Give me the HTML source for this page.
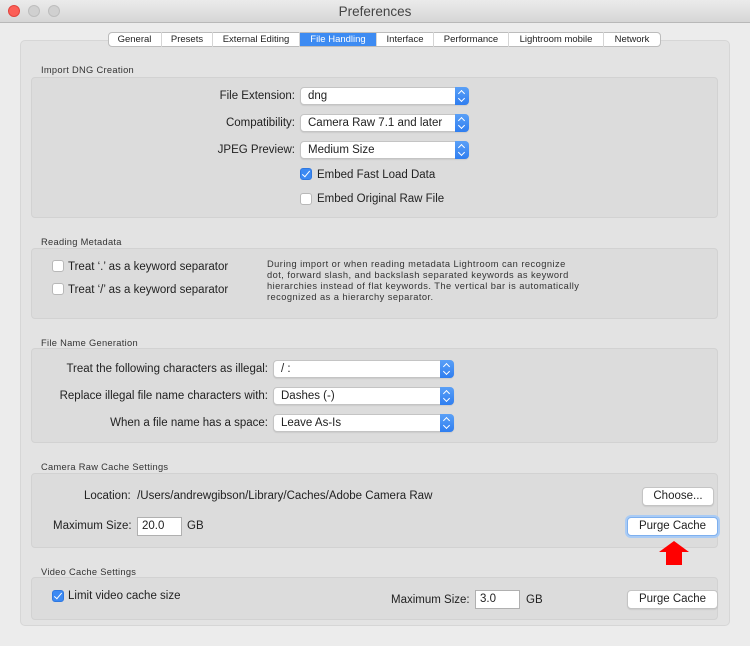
<!DOCTYPE html>
<html><head><meta charset="utf-8"><style>
*{margin:0;padding:0;box-sizing:border-box}
body{width:750px;height:646px;background:#ececec;font-family:"Liberation Sans",sans-serif;color:#222;position:relative;overflow:hidden}
.a{position:absolute;white-space:nowrap}
.t{font-size:11.5px;line-height:14px}
.g{font-size:9.3px;color:#333;line-height:11px;letter-spacing:.3px}
.box{position:absolute;left:31px;width:687px;background:#dcdcdc;border:1px solid #d2d2d2;border-radius:4px}
.pop{position:absolute;height:18px;background:#fff;border:1px solid #c4c4c4;border-radius:4px;font-size:11.5px;line-height:16px;padding-left:7px;box-shadow:0 1px 1px rgba(0,0,0,.08)}
.pop .s{position:absolute;right:-1px;top:-1px;width:14px;height:18px;background:linear-gradient(#5aa0f7,#2f7ef0);border-radius:0 4px 4px 0}
.pop .s:before{content:"";position:absolute;left:4px;top:4px;width:4px;height:4px;border-left:1.3px solid #fff;border-top:1.3px solid #fff;transform:rotate(45deg)}
.pop .s:after{content:"";position:absolute;left:4px;top:9px;width:4px;height:4px;border-right:1.3px solid #fff;border-bottom:1.3px solid #fff;transform:rotate(45deg)}
.cb{position:absolute;width:12px;height:12px;background:#fff;border:1px solid #b8b8b8;border-radius:3px}
.cb.on{background:#3b89f3;border-color:#2f78e0}
.cb.on:after{content:"";position:absolute;left:3px;top:0px;width:3px;height:7px;border-right:1.6px solid #fff;border-bottom:1.6px solid #fff;transform:rotate(40deg)}
.btn{position:absolute;height:19px;background:#fff;border:1px solid #c4c4c4;border-radius:4px;font-size:11.5px;line-height:17px;text-align:center;box-shadow:0 1px 1px rgba(0,0,0,.08)}
.inp{position:absolute;height:19px;background:#fff;border:1px solid #b0b0b0;font-size:11.5px;line-height:17px;padding-left:4px}
.tab{position:absolute;top:32px;height:15px;font-size:9.5px;line-height:16px;text-align:center;border-right:1px solid #d5d5d5}
</style></head><body>
<div class="a" style="left:0;top:0;width:750px;height:23px;background:linear-gradient(#ebebeb,#d6d6d6);border-bottom:1px solid #b8b8b8"></div>
<div class="a" style="left:8px;top:5px;width:12px;height:12px;border-radius:6px;background:#fc5f57;border:1px solid #e1443e"></div>
<div class="a" style="left:28px;top:5px;width:12px;height:12px;border-radius:6px;background:#d0d0d0;border:1px solid #bdbdbd"></div>
<div class="a" style="left:48px;top:5px;width:12px;height:12px;border-radius:6px;background:#d0d0d0;border:1px solid #bdbdbd"></div>
<div class="a" style="left:0;width:750px;top:4px;text-align:center;font-size:13.5px;color:#444">Preferences</div>

<div class="a" style="left:20px;top:40px;width:710px;height:586px;background:#e3e3e3;border:1px solid #d6d6d6;border-radius:5px"></div>
<div class="a" style="left:108px;top:32px;width:553px;height:15px;background:#fff;border:1px solid #bcbcbc;border-radius:4px"></div>
<div class="tab" style="left:108px;width:54px">General</div>
<div class="tab" style="left:162px;width:51px">Presets</div>
<div class="tab" style="left:213px;width:87px">External Editing</div>
<div class="tab" style="left:300px;width:77px;background:#3d8bf2;color:#fff;top:33px;height:13px;line-height:14px">File Handling</div>
<div class="tab" style="left:377px;width:57px">Interface</div>
<div class="tab" style="left:434px;width:75px">Performance</div>
<div class="tab" style="left:509px;width:95px">Lightroom mobile</div>
<div class="tab" style="left:604px;width:56px;border-right:none">Network</div>

<div class="a g" style="left:41px;top:65px">Import DNG Creation</div>
<div class="box" style="top:77px;height:141px"></div>
<div class="a t" style="left:150px;width:145px;text-align:right;top:89px">File Extension:</div>
<div class="pop" style="left:300px;top:87px;width:169px">dng<div class="s"></div></div>
<div class="a t" style="left:150px;width:145px;text-align:right;top:116px">Compatibility:</div>
<div class="pop" style="left:300px;top:114px;width:169px">Camera Raw 7.1 and later<div class="s"></div></div>
<div class="a t" style="left:150px;width:145px;text-align:right;top:143px">JPEG Preview:</div>
<div class="pop" style="left:300px;top:141px;width:169px">Medium Size<div class="s"></div></div>
<div class="cb on" style="left:300px;top:168px"></div>
<div class="a t" style="left:317px;top:168px">Embed Fast Load Data</div>
<div class="cb" style="left:300px;top:193px"></div>
<div class="a t" style="left:317px;top:192px">Embed Original Raw File</div>

<div class="a g" style="left:41px;top:237px">Reading Metadata</div>
<div class="box" style="top:248px;height:71px"></div>
<div class="cb" style="left:52px;top:260px"></div>
<div class="a t" style="left:68px;top:260px">Treat ‘.’ as a keyword separator</div>
<div class="cb" style="left:52px;top:283px"></div>
<div class="a t" style="left:68px;top:283px">Treat ‘/’ as a keyword separator</div>
<div class="a g" style="left:267px;top:259px;line-height:11px;font-size:9.3px;letter-spacing:.45px">During import or when reading metadata Lightroom can recognize<br>dot, forward slash, and backslash separated keywords as keyword<br>hierarchies instead of flat keywords. The vertical bar is automatically<br>recognized as a hierarchy separator.</div>

<div class="a g" style="left:41px;top:338px">File Name Generation</div>
<div class="box" style="top:348px;height:95px"></div>
<div class="a t" style="left:40px;width:228px;text-align:right;top:362px">Treat the following characters as illegal:</div>
<div class="pop" style="left:273px;top:360px;width:181px">/ :<div class="s"></div></div>
<div class="a t" style="left:40px;width:228px;text-align:right;top:389px">Replace illegal file name characters with:</div>
<div class="pop" style="left:273px;top:387px;width:181px">Dashes (-)<div class="s"></div></div>
<div class="a t" style="left:40px;width:228px;text-align:right;top:416px">When a file name has a space:</div>
<div class="pop" style="left:273px;top:414px;width:181px">Leave As-Is<div class="s"></div></div>

<div class="a g" style="left:41px;top:462px">Camera Raw Cache Settings</div>
<div class="box" style="top:473px;height:75px"></div>
<div class="a t" style="left:84px;top:489px">Location:&nbsp; /Users/andrewgibson/Library/Caches/Adobe Camera Raw</div>
<div class="btn" style="left:642px;top:487px;width:72px">Choose...</div>
<div class="a t" style="left:53px;top:519px">Maximum Size:</div>
<div class="inp" style="left:137px;top:517px;width:45px">20.0</div>
<div class="a t" style="left:187px;top:519px">GB</div>
<div class="btn" style="left:627px;top:517px;width:91px;border-color:#7fb0ee;box-shadow:0 0 0 2px #a9cbf5">Purge Cache</div>
<svg class="a" style="left:658px;top:540px" width="32" height="26"><path d="M16 1 L31 12 L24 12 L24 25 L8 25 L8 12 L1 12 Z" fill="#f00"/></svg>

<div class="a g" style="left:41px;top:567px">Video Cache Settings</div>
<div class="box" style="top:577px;height:43px"></div>
<div class="cb on" style="left:52px;top:590px"></div>
<div class="a t" style="left:68px;top:589px">Limit video cache size</div>
<div class="a t" style="left:391px;top:593px">Maximum Size:</div>
<div class="inp" style="left:475px;top:590px;width:45px">3.0</div>
<div class="a t" style="left:526px;top:593px">GB</div>
<div class="btn" style="left:627px;top:590px;width:91px">Purge Cache</div>
</body></html>
